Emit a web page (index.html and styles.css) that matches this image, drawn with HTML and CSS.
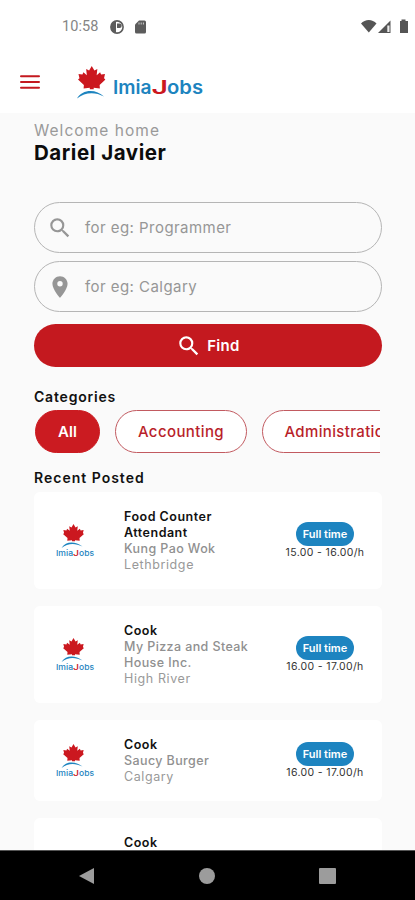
FILE: index.html
```html
<!DOCTYPE html>
<html lang="en">
<head>
	<meta charset="UTF-8">
	<meta name="viewport" content="width=device-width, initial-scale=1.0">
	<title>ImiaJobs</title>
	<link rel="stylesheet" href="styles.css">
</head>
<body>
	<svg class="defs" width="0" height="0">
		<symbol id="leaf" viewBox="0 0 28 23" preserveAspectRatio="none">
			<path d="M14 0l2.700 4.500L19.700 3 19 9l3.500-2.800 1 2.200 4-.6-1 4.200 1.500 1.300-6 5.200.3 3.500L16 21.300V23h-4v-1.700L5.700 22l.3-3.500-6-5.200L1.500 12 .5 7.800l4 .6 1-2.200L9 9 8.300 3l3 1.500z"/>
		</symbol>
		<symbol id="search" viewBox="0 0 24 24">
			<path d="M15.5 14h-.79l-.28-.27A6.47 6.47 0 0 0 16 9.5 6.5 6.5 0 1 0 9.5 16c1.61 0 3.09-.59 4.23-1.57l.27.28v.79l5 4.99L20.49 19l-4.99-5zm-6 0C7.01 14 5 11.99 5 9.5S7.01 5 9.5 5 14 7.01 14 9.5 11.99 14 9.5 14z"/>
		</symbol>
	</svg>

	<div class="phone">
		<header>
			<div class="status">
				<span class="time">10:58</span>
				<svg class="status-app" width="14" height="14" viewBox="0 0 14 14">
					<circle cx="7" cy="7" r="6.1" fill="none" stroke="#5c5c5c" stroke-width="1.6"/>
					<path d="M6 1v12A6 6 0 0 1 3 2.500zM7 3.500h2.500a2 2 0 0 1 0 4.500H7z" fill="#5c5c5c"/>
				</svg>
				<svg class="status-card" width="11" height="14" viewBox="0 0 11 14">
					<path d="M4 .5h5.500A1.500 1.500 0 0 1 11 2v10a1.500 1.500 0 0 1-1.500 1.500h-8A1.500 1.500 0 0 1 0 12V4.500z" fill="#5c5c5c"/>
					<path d="M4 2.500v2M6.200 2.500v2M8.400 2.500v2" stroke="#ccc"/>
				</svg>
				<svg class="status-right" width="47" height="15" viewBox="0 0 47 15">
					<path d="M0 4.500C4-.2 11.500-.2 15.500 4.500L7.800 13.500z" fill="#555"/>
					<path d="M17 14 29.500 1.500V14z" fill="#555"/>
					<path d="M26.300 6.500h2.200V13h-2.200z" fill="#eee"/>
					<path d="M40.500 .5h4V2H47v12h-8V2h1.500z" fill="#555"/>
				</svg>
			</div>
			<div class="topbar">
				<svg class="menu" width="20" height="14" viewBox="0 0 20 14">
					<path d="M1 1.200h18M1 7h18M1 12.800h18" stroke="#c4191f" stroke-width="2" stroke-linecap="round"/>
				</svg>
				<svg class="logo" width="128" height="34" viewBox="0 0 128 34">
					<use href="#leaf" class="red" x="2" y="1" width="27.500" height="23.500"/>
					<path class="blue" d="M1 33.500C6 24 20 23.500 28 31.500 19 26.500 9 27 1 33.500z"/>
					<g class="logo-text" font-size="18.500">
						<text x="37" y="29" textLength="38.500" lengthAdjust="spacingAndGlyphs">Imia</text>
						<text class="red" x="75.500" y="29" textLength="16.500" lengthAdjust="spacingAndGlyphs">J</text>
						<text x="91" y="29" textLength="36" lengthAdjust="spacingAndGlyphs">obs</text>
					</g>
				</svg>
			</div>
		</header>

		<main>
			<p class="welcome">Welcome home</p>
			<h1>Dariel Javier</h1>

			<form class="search">
				<div class="field">
					<svg width="26" height="26"><use href="#search"/></svg>
					<span class="hint">for eg: Programmer</span>
				</div>
				<div class="field">
					<svg width="26" height="26" viewBox="0 0 24 24">
						<path d="M12 2C8.130 2 5 5.130 5 9c0 5.250 7 13 7 13s7-7.750 7-13c0-3.870-3.130-7-7-7zm0 9.500a2.500 2.500 0 1 1 0-5 2.500 2.500 0 0 1 0 5z"/>
					</svg>
					<span class="hint">for eg: Calgary</span>
				</div>
				<button type="button" class="find">
					<svg width="26" height="26"><use href="#search"/></svg>
					<span>Find</span>
				</button>
			</form>

			<h2>Categories</h2>
			<div class="chips">
				<span class="chip active">All</span>
				<span class="chip accounting">Accounting</span>
				<span class="chip administration">Administration</span>
			</div>

			<h2 class="recent">Recent Posted</h2>
			<div class="jobs">
				<div class="job">
					<svg class="job-logo" width="40" height="34" viewBox="0 0 40 34">
						<use href="#leaf" class="red" x="8" y="0" width="21" height="17.500"/>
						<path class="blue" d="M6.500 24C11 17 20 17 27.500 22.500 20 19 13 19 6.500 24z"/>
						<g class="logo-text small">
							<text x="1" y="31.500" textLength="17" lengthAdjust="spacingAndGlyphs">Imia</text>
							<text class="red" x="18" y="31.500" textLength="6" lengthAdjust="spacingAndGlyphs">J</text>
							<text x="24" y="31.500" textLength="15" lengthAdjust="spacingAndGlyphs">obs</text>
						</g>
					</svg>
					<div class="info">
						<h3>Food Counter Attendant</h3>
						<p class="company">Kung Pao Wok</p>
						<p class="city">Lethbridge</p>
					</div>
					<div class="side">
						<span class="type">Full time</span>
						<span class="rate">15.00 - 16.00/h</span>
					</div>
				</div>
				<div class="job">
					<svg class="job-logo" width="40" height="34" viewBox="0 0 40 34">
						<use href="#leaf" class="red" x="8" y="0" width="21" height="17.500"/>
						<path class="blue" d="M6.500 24C11 17 20 17 27.500 22.500 20 19 13 19 6.500 24z"/>
						<g class="logo-text small">
							<text x="1" y="31.500" textLength="17" lengthAdjust="spacingAndGlyphs">Imia</text>
							<text class="red" x="18" y="31.500" textLength="6" lengthAdjust="spacingAndGlyphs">J</text>
							<text x="24" y="31.500" textLength="15" lengthAdjust="spacingAndGlyphs">obs</text>
						</g>
					</svg>
					<div class="info">
						<h3>Cook</h3>
						<p class="company">My Pizza and Steak House Inc.</p>
						<p class="city">High River</p>
					</div>
					<div class="side">
						<span class="type">Full time</span>
						<span class="rate">16.00 - 17.00/h</span>
					</div>
				</div>
				<div class="job">
					<svg class="job-logo" width="40" height="34" viewBox="0 0 40 34">
						<use href="#leaf" class="red" x="8" y="0" width="21" height="17.500"/>
						<path class="blue" d="M6.500 24C11 17 20 17 27.500 22.500 20 19 13 19 6.500 24z"/>
						<g class="logo-text small">
							<text x="1" y="31.500" textLength="17" lengthAdjust="spacingAndGlyphs">Imia</text>
							<text class="red" x="18" y="31.500" textLength="6" lengthAdjust="spacingAndGlyphs">J</text>
							<text x="24" y="31.500" textLength="15" lengthAdjust="spacingAndGlyphs">obs</text>
						</g>
					</svg>
					<div class="info">
						<h3>Cook</h3>
						<p class="company">Saucy Burger</p>
						<p class="city">Calgary</p>
					</div>
					<div class="side">
						<span class="type">Full time</span>
						<span class="rate">16.00 - 17.00/h</span>
					</div>
				</div>
				<div class="job last">
					<div class="info">
						<h3>Cook</h3>
					</div>
				</div>
			</div>
		</main>

		<nav>
			<svg width="16" height="18" viewBox="0 0 16 18"><path d="M0 9 15 1v16z"/></svg>
			<svg width="16" height="16" viewBox="0 0 16 16"><circle cx="8" cy="8" r="8"/></svg>
			<svg width="17" height="16" viewBox="0 0 17 16"><rect width="17" height="16" rx="1"/></svg>
		</nav>
	</div>
</body>
</html>
```

FILE: styles.css
```css
* {
	box-sizing: border-box;
}

body {
	margin: 0;
	font-family: Inter, "Open Sans", sans-serif;
	background: #fafafa;
}

h1, h2, h3, p {
	margin: 0;
}

.defs {
	display: block;
}

.red {
	fill: #cb181f;
}

.blue {
	fill: #1d84bf;
}

.logo-text {
	font-family: Inter, sans-serif;
	font-weight: 600;
	fill: #1d84bf;
}

.small {
	font-size: 8px;
	font-weight: 500;
}

.logo-text .red {
	fill: #cb181f;
}

.phone {
	display: flex;
	flex-direction: column;
	width: 415px;
	height: 900px;
	overflow: hidden;
}

header {
	flex: none;
	height: 113px;
	background: #fff;
}

.status {
	display: flex;
	align-items: center;
	height: 53px;
	padding: 0 7px 0 62px;
}

.time {
	width: 48px;
	font-family: Roboto, sans-serif;
	font-size: 14.5px;
	letter-spacing: 0.1px;
	color: #858585;
}

.status-card {
	margin-left: 11px;
}

.status-right {
	margin-left: auto;
}

.topbar {
	display: flex;
	align-items: center;
	gap: 36px;
	height: 58px;
	padding-left: 20px;
}

main {
	flex: 1;
	min-height: 0;
	padding: 8px 33px 0 34px;
	overflow: hidden;
}

.welcome {
	font-size: 15.5px;
	line-height: 20px;
	letter-spacing: 1.05px;
	color: #999;
}

h1 {
	font-size: 20.5px;
	line-height: 24px;
	font-weight: 700;
	letter-spacing: 0.55px;
	color: #0c0c0c;
}

.search {
	display: flex;
	flex-direction: column;
	gap: 8px;
	margin-top: 37px;
}

.field {
	display: flex;
	align-items: center;
	gap: 12px;
	height: 51px;
	padding-left: 12px;
	border: 1px solid #b5b5b5;
	border-radius: 26px;
	font-size: 15px;
	color: #969696;
}

.field svg {
	fill: #969696;
}

.hint {
	letter-spacing: 0.45px;
}

.find {
	display: flex;
	justify-content: center;
	align-items: center;
	gap: 5px;
	height: 43px;
	margin-top: 4px;
	border: none;
	border-radius: 22px;
	background: #c4191f;
	color: #fff;
	font-family: inherit;
	font-size: 15px;
	font-weight: 600;
	letter-spacing: 0.3px;
}

.find svg {
	fill: #fff;
}

h2 {
	margin-top: 20px;
	font-size: 14px;
	line-height: 20px;
	font-weight: 600;
	letter-spacing: 0.8px;
	color: #111;
}

.chips {
	display: flex;
	gap: 15px;
	margin: 3px 2px 0 1px;
	overflow: hidden;
}

.chip {
	flex: none;
	display: flex;
	justify-content: center;
	align-items: center;
	width: 65px;
	height: 43px;
	border: 1px solid #c25a60;
	border-radius: 22px;
	background: #fff;
	color: #b91f2b;
	font-size: 15px;
	font-weight: 500;
}

.active {
	background: #cb1b21;
	border-color: #cb1b21;
	color: #fff;
	font-weight: 600;
}

.accounting {
	width: 132px;
	letter-spacing: 0.4px;
}

.administration {
	width: 154px;
	letter-spacing: 0.35px;
}

.recent {
	margin-top: 15px;
	letter-spacing: 1px;
}

.jobs {
	display: flex;
	flex-direction: column;
	gap: 17px;
	margin-top: 4px;
}

.job {
	display: flex;
	align-items: center;
	padding: 17px 16px 16px 21px;
	border-radius: 6px;
	background: #fff;
}

.last {
	padding-left: 90px;
}

.job-logo {
	flex: none;
	margin-right: 29px;
}

.info {
	width: 140px;
	font-size: 12.5px;
	line-height: 16px;
}

.info h3 {
	width: 110px;
	font-size: 12.5px;
	font-weight: 600;
	letter-spacing: 0.5px;
	color: #111;
}

.company {
	font-weight: 500;
	letter-spacing: 0.4px;
	color: #909090;
}

.city {
	letter-spacing: 0.6px;
	color: #999;
}

.side {
	display: flex;
	flex-direction: column;
	align-items: center;
	width: 82px;
	margin-left: auto;
}

.type {
	width: 58px;
	height: 24px;
	border-radius: 12px;
	background: #1d84c0;
	color: #fff;
	font-size: 11px;
	line-height: 24px;
	font-weight: 600;
	text-align: center;
}

.rate {
	font-size: 10.5px;
	line-height: 14px;
	letter-spacing: 0.35px;
	white-space: nowrap;
	color: #333;
}

nav {
	flex: none;
	display: flex;
	justify-content: space-between;
	align-items: center;
	height: 50px;
	padding: 0 79px;
	border-top: 1px solid #555;
	background: #000;
}

nav svg {
	fill: #9c9c9c;
}
```
